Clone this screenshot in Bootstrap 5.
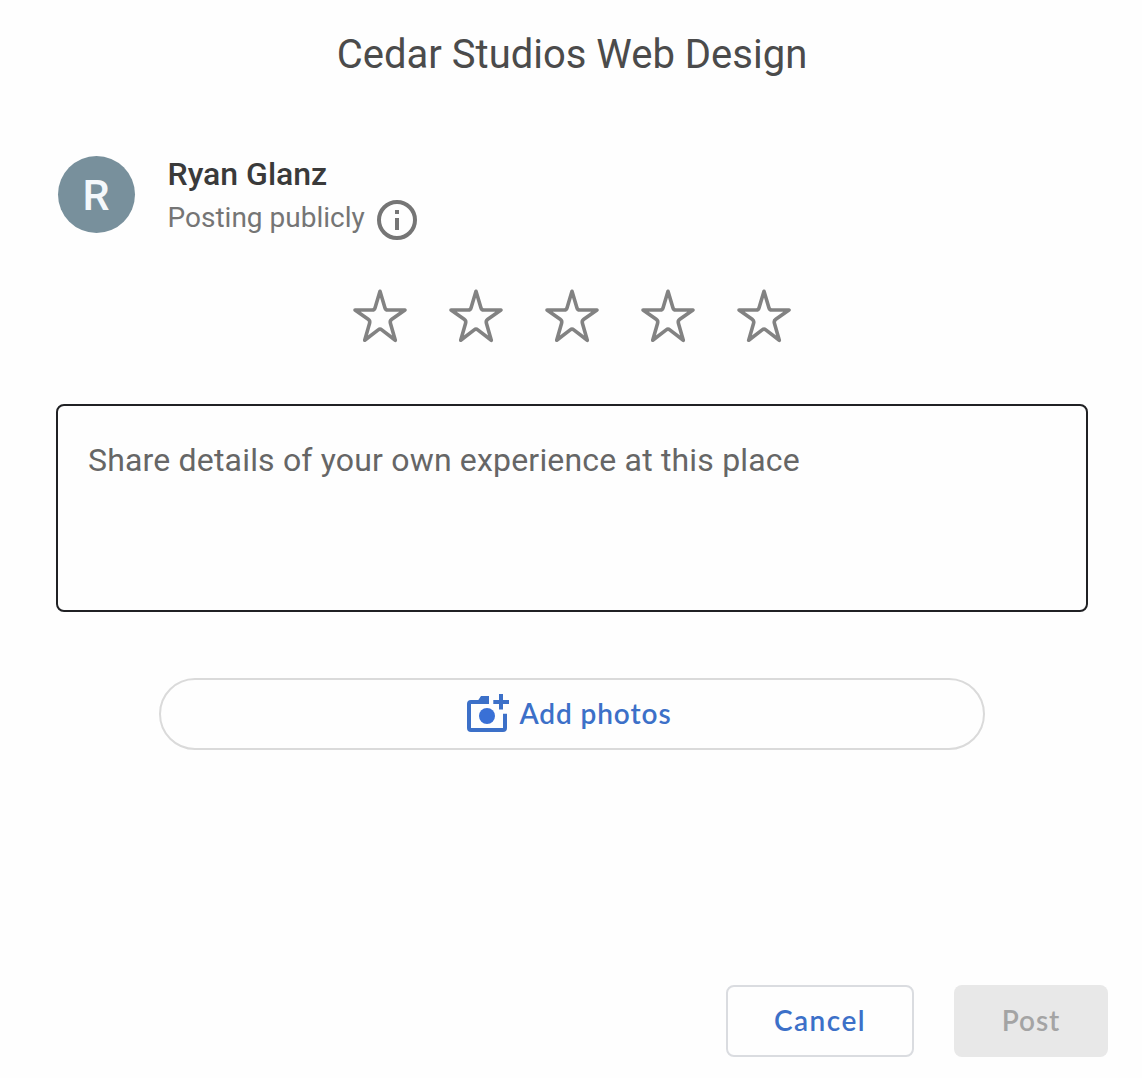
<!DOCTYPE html>
<html lang="en">
<head>
<meta charset="utf-8">
<meta name="viewport" content="width=device-width, initial-scale=1">
<title>Cedar Studios Web Design</title>
<link href="https://cdn.jsdelivr.net/npm/bootstrap@5.3.0/dist/css/bootstrap.min.css" rel="stylesheet">
<style>
  body { font-family: Roboto, "Liberation Sans", sans-serif; background: #fefefe; }
  .review { width: 1142px; height: 1078px; overflow: hidden; padding: 31px 34px 21px 56px; }
  .review-title { font-size: 40px; line-height: 48px; color: #4b4b4b; margin-right: 20px; }
  .author { margin-top: 71px; height: 90px; gap: 33px; }
  .avatar { width: 77px; height: 77px; margin: 6px 0 0 1.5px; padding-top: 2px; background: #78909c; color: #f4f8fb; font-size: 43px; font-weight: 500; }
  .author-name { font-size: 32px; line-height: 48px; font-weight: 500; color: #3a3a3a; }
  .author-note { font-size: 28px; line-height: 40px; color: #757575; gap: 12px; }
  .author-note svg { margin-top: 2px; }
  .stars { margin: 44px 20px 0 0; gap: 32px; }
  .stars svg { width: 64px; height: 64px; }
  .review-text { width: 1032px; height: 208px; margin-top: 56px; padding: 30px; border: 2px solid #202124; border-radius: 8px; font-size: 32px; line-height: 48px; letter-spacing: .18px; resize: none; background: #fefefe; }
  .review-text::placeholder { color: #666; opacity: 1; }
  .btn { font-family: Lato, "Open Sans", sans-serif; font-size: 28px; line-height: 36px; font-weight: 600; letter-spacing: .9px; height: 72px; padding: 0 0 3px; }
  .btn-photos { width: 826px; margin: 66px 0 0 103px; padding: 0 8px 0 0; gap: 7px; border: 2px solid #dadada; color: #3c70c8; }
  .btn-photos span { padding-bottom: 3px; }
  .actions { gap: 40px; }
  .btn-cancel { width: 188px; border: 2px solid #dadce0; border-radius: 8px; color: #3c70c8; letter-spacing: 1.5px; }
  .btn-post, .btn-post:disabled { width: 154px; border: 0; border-radius: 8px; background: #e8e8e8; color: #a4a4a4; opacity: 1; }
</style>
</head>
<body>
<svg class="d-none">
  <symbol id="star" viewBox="0 0 64 64">
    <path d="M32 7.300 27 23.900Q26.400 26 24.200 26H7L20.200 35.300Q22.300 36.800 21.600 39.200L16.700 56.300 30.200 45.900Q32 44.500 33.800 45.900L47.300 56.300 42.400 39.200Q41.700 36.800 43.800 35.300L57 26H39.800Q37.600 26 37 23.900Z" fill="none" stroke="#828282" stroke-width="3.600" stroke-linejoin="round"/>
  </symbol>
</svg>
<main class="review d-flex flex-column">
  <h1 class="review-title text-center fw-normal mb-0 mt-0">Cedar Studios Web Design</h1>
  <div class="author d-flex">
    <div class="avatar rounded-circle d-flex align-items-center justify-content-center">R</div>
    <div>
      <div class="author-name">Ryan Glanz</div>
      <div class="author-note d-flex">
        <span>Posting publicly</span>
        <svg width="40" height="40" viewBox="0 0 40 40"><circle cx="20" cy="20" r="18" fill="none" stroke="#757575" stroke-width="4"/><path d="M18 10h4v4h-4zM18 18h4v12h-4z" fill="#757575"/></svg>
      </div>
    </div>
  </div>
  <div class="stars d-flex justify-content-center">
    <svg><use href="#star"/></svg>
    <svg><use href="#star"/></svg>
    <svg><use href="#star"/></svg>
    <svg><use href="#star"/></svg>
    <svg><use href="#star"/></svg>
  </div>
  <textarea class="review-text form-control shadow-none" placeholder="Share details of your own experience at this place"></textarea>
  <button type="button" class="btn btn-photos rounded-pill d-flex align-items-center justify-content-center">
    <svg width="48" height="44" viewBox="0 0 48 44"><path d="M25 10H7Q5 10 5 12V36Q5 38 7 38H39Q41 38 41 36V21.700" fill="none" stroke="#3c70c8" stroke-width="4"/><path d="M13 10 17 4H25V12H13zM35 2h4v6h6v4h-6v5.500h-4V12h-5.700V8H35z" fill="#3c70c8"/><circle cx="23" cy="24" r="8" fill="#3970d6"/></svg>
    <span>Add photos</span>
  </button>
  <div class="actions d-flex justify-content-end mt-auto">
    <button type="button" class="btn btn-cancel">Cancel</button>
    <button type="button" class="btn btn-post" disabled>Post</button>
  </div>
</main>
<script src="https://cdn.jsdelivr.net/npm/bootstrap@5.3.0/dist/js/bootstrap.bundle.min.js"></script>
</body>
</html>
